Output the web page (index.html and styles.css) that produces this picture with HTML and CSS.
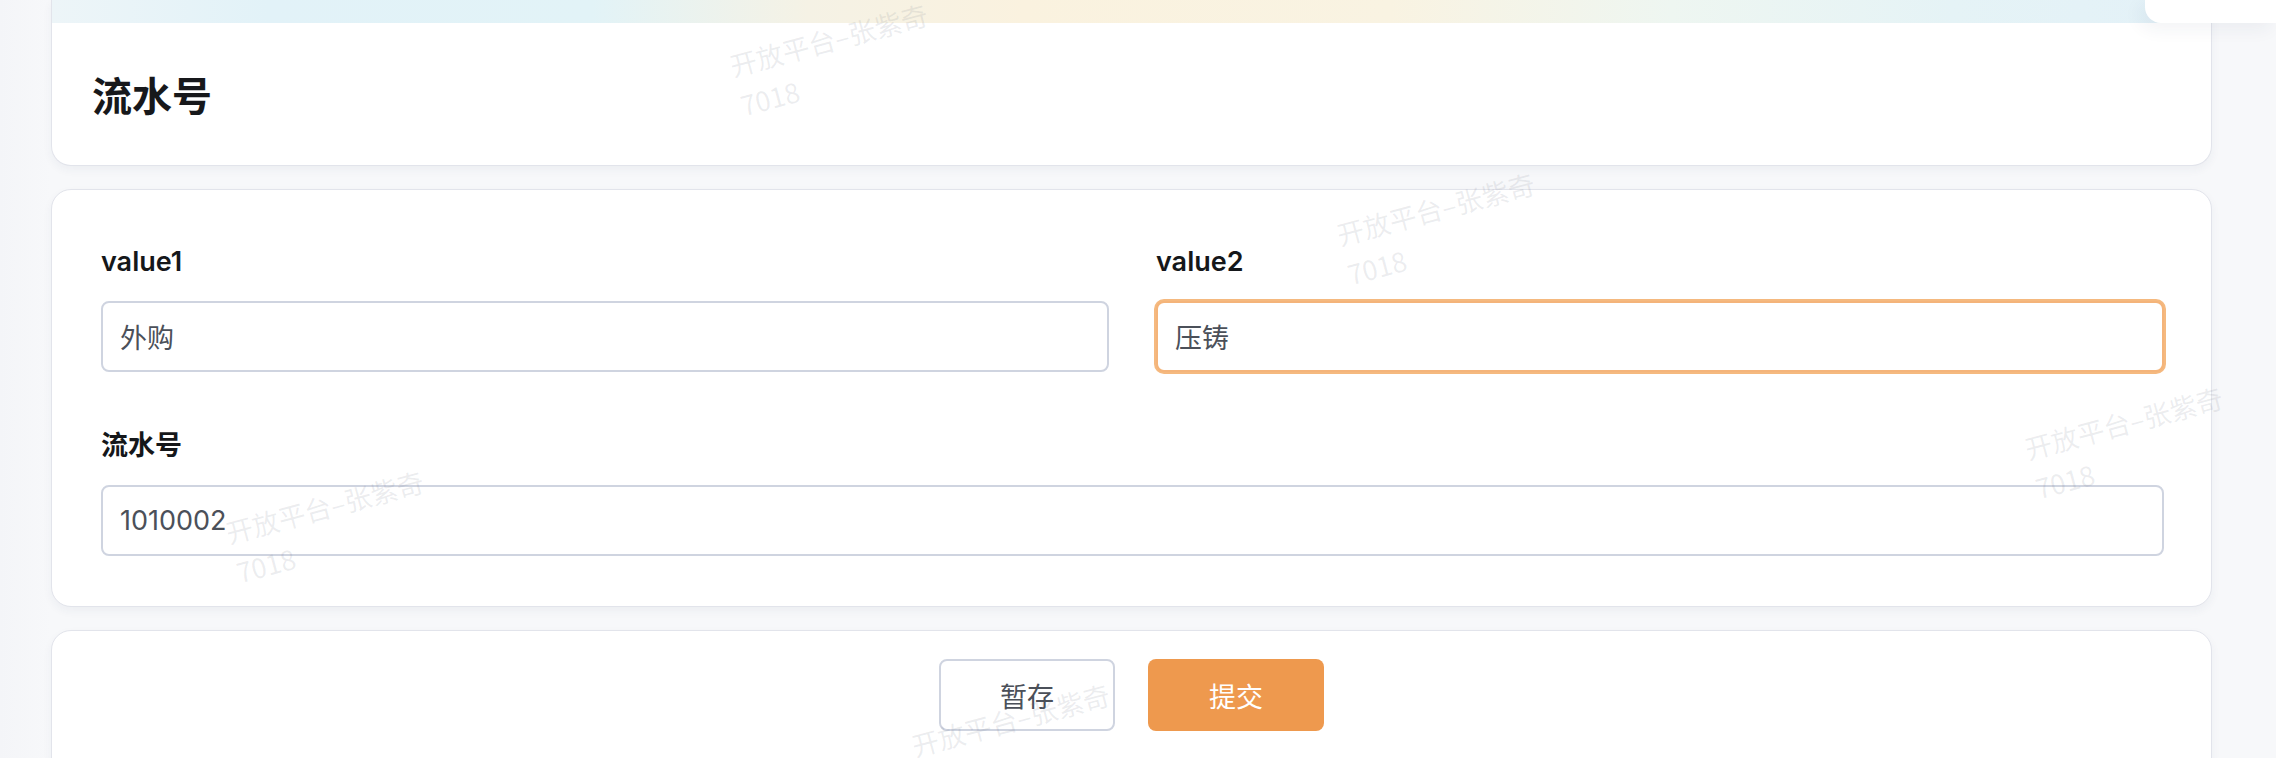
FILE: index.html
```html
<!DOCTYPE html>
<html lang="zh-CN">
<head>
<meta charset="utf-8">
<title>流水号</title>
<link rel="stylesheet" href="styles.css">
</head>
<body>
<div class="page">
  <main class="content">
    <section class="card head-card">
      <div class="head-band"></div>
      <div class="head-body">
        <h1 class="title">流水号</h1>
      </div>
    </section>

    <section class="card form-card">
      <div class="form-grid">
        <div class="field">
          <label class="field-label">value1</label>
          <div class="input">外购</div>
        </div>
        <div class="field">
          <label class="field-label">value2</label>
          <div class="input input-focus">压铸</div>
        </div>
        <div class="field field-wide">
          <label class="field-label">流水号</label>
          <div class="input">1010002</div>
        </div>
      </div>
    </section>

    <section class="card action-card">
      <button class="btn btn-plain">暂存</button>
      <button class="btn btn-primary">提交</button>
    </section>
  </main>

  <div class="corner-tab"></div>

  <div class="watermarks">
    <div class="wm wm1">开放平台–张紫奇<br>7018</div>
    <div class="wm wm2">开放平台–张紫奇<br>7018</div>
    <div class="wm wm3">开放平台–张紫奇<br>7018</div>
    <div class="wm wm4">开放平台–张紫奇<br>7018</div>
    <div class="wm wm5">开放平台–张紫奇<br>7018</div>
  </div>
</div>
</body>
</html>
```

FILE: styles.css
```css
* {
  box-sizing: border-box;
}

html, body {
  margin: 0;
  padding: 0;
  background: #f7f8fa;
}

body {
  width: 2276px;
  height: 758px;
  overflow: hidden;
  font-family: Inter, "Noto Sans CJK SC", sans-serif;
  color: #1d1f24;
}

.page {
  position: relative;
  width: 2276px;
  height: 758px;
  overflow: hidden;
  background: linear-gradient(90deg, #f4f5f8 0px, #f7f8fa 51px);
}

.content {
  display: flex;
  flex-direction: column;
  gap: 23px;
  padding: 0 64px 0 51px;
}

.card {
  background: #ffffff;
  border: 1px solid #e2e4eb;
  border-radius: 20px;
  box-shadow: 0 4px 10px rgba(40, 50, 90, 0.05);
}

/* header card */
.head-card {
  border-top: none;
  border-top-left-radius: 0;
  border-top-right-radius: 0;
  overflow: hidden;
}

.head-band {
  height: 23px;
  background: linear-gradient(90deg,
    #edf5f8 0%,
    #e2f2f8 10%,
    #e2f3f7 25%,
    #f5f2e5 35%,
    #faf2df 45%,
    #f9f3e2 62%,
    #eef6f1 75%,
    #e5f3f6 88%,
    #e3f1f8 100%);
}

.head-body {
  height: 142px;
  display: flex;
  align-items: center;
  padding-left: 40px;
}

.title {
  margin: 0;
  font-family: "Noto Sans CJK SC", sans-serif;
  font-size: 40px;
  font-weight: 700;
  line-height: 50px;
  color: #17181b;
}

/* form card */
.form-card {
  padding: 54px 47px 50px 49px;
}

.form-grid {
  display: grid;
  grid-template-columns: 1fr 1fr;
  column-gap: 47px;
  row-gap: 56px;
}

.field {
  display: flex;
  flex-direction: column;
  gap: 21px;
}

.field-wide {
  grid-column: 1 / span 2;
}

.field-label {
  font-family: Inter, "Noto Sans CJK SC", sans-serif;
  font-size: 27px;
  font-weight: 600;
  line-height: 36px;
  color: #15171a;
}

.input {
  height: 71px;
  display: flex;
  align-items: center;
  padding-left: 17px;
  border: 2px solid #cfd4e0;
  border-radius: 8px;
  background: #ffffff;
  font-family: Inter, "Noto Sans CJK SC", sans-serif;
  font-size: 27px;
  color: #4b5059;
}

.input-focus {
  border-color: #f4b47a;
  box-shadow: 0 0 0 2px #f5b97f;
}

/* action card */
.action-card {
  display: flex;
  justify-content: center;
  gap: 33px;
  padding: 28px 0 28px;
  border-bottom-left-radius: 0;
  border-bottom-right-radius: 0;
}

.btn {
  width: 176px;
  height: 72px;
  border-radius: 8px;
  font-family: "Noto Sans CJK SC", sans-serif;
  font-size: 27px;
  cursor: pointer;
}

.btn-plain {
  background: #ffffff;
  border: 2px solid #cfd4e0;
  color: #4b5059;
}

.btn-primary {
  background: #ee994e;
  border: none;
  color: #ffffff;
}

/* floating tab top-right */
.corner-tab {
  position: absolute;
  top: 0;
  right: 0;
  width: 131px;
  height: 23px;
  background: #ffffff;
  border-bottom-left-radius: 16px;
  box-shadow: -6px 6px 18px rgba(40, 50, 90, 0.06);
}

/* watermarks */
.watermarks {
  position: absolute;
  inset: 0;
  pointer-events: none;
}

.wm {
  position: absolute;
  transform: rotate(-15deg);
  transform-origin: 0 0;
  font-family: "Noto Sans CJK SC", sans-serif;
  font-size: 27px;
  line-height: 41px;
  white-space: nowrap;
  color: rgba(110, 115, 130, 0.13);
}

.wm1 { left: 725px; top: 46px; }
.wm2 { left: 1332px; top: 215px; }
.wm3 { left: 2020px; top: 429px; }
.wm4 { left: 221px; top: 513px; }
.wm5 { left: 907px; top: 726px; }
```
